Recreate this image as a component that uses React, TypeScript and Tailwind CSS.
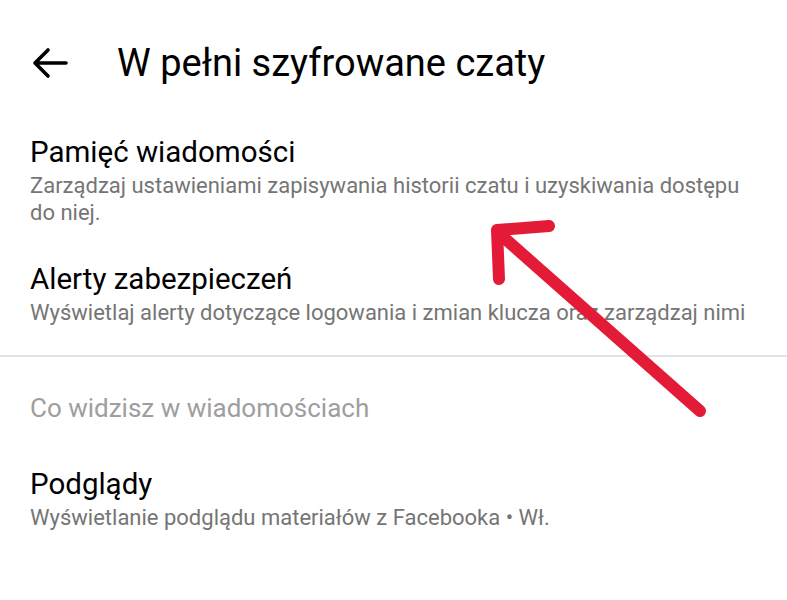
function Row({ title, desc }: { title: string; desc: string }) {
  return (
    <div className="pl-[30px] pr-[30px]">
      <div className="text-[29.5px] leading-[38px] text-black">{title}</div>
      <div className="mt-[1px] text-[22px] leading-[27px] text-[#757575]">{desc}</div>
    </div>
  );
}

function BackArrow() {
  return (
    <svg width="40" height="34" viewBox="0 0 40 34" fill="none" className="text-black">
      <path
        d="M5 17H36M18 4L5 17L18 30"
        stroke="currentColor"
        strokeWidth="3.6"
        strokeLinecap="round"
        strokeLinejoin="round"
      />
    </svg>
  );
}

export default function App() {
  return (
    <div className="relative w-[787px] h-[600px] bg-white overflow-hidden font-['Roboto','Noto_Sans',sans-serif]">
      {/* Header */}
      <div className="flex items-center h-[126px]">
        <div className="w-[117px] pl-[30px] flex items-center">
          <BackArrow />
        </div>
        <h1 className="text-[38px] text-black leading-none">W pełni szyfrowane czaty</h1>
      </div>

      <div className="pt-[7px] flex flex-col gap-[34px]">
        <Row
          title="Pamięć wiadomości"
          desc="Zarządzaj ustawieniami zapisywania historii czatu i uzyskiwania dostępu do niej."
        />
        <Row
          title="Alerty zabezpieczeń"
          desc="Wyświetlaj alerty dotyczące logowania i zmian klucza oraz zarządzaj nimi"
        />
      </div>

      <div className="mt-[29px] h-[2px] bg-[#e3e3e3]" />

      <div className="px-[30px] pt-[35px] text-[26px] leading-[32px] text-[#9e9e9e]">
        Co widzisz w wiadomościach
      </div>

      <div className="mt-[41px]">
        <Row
          title="Podglądy"
          desc="Wyświetlanie podglądu materiałów z Facebooka • Wł."
        />
      </div>

      {/* Red annotation arrow */}
      <svg className="absolute inset-0 pointer-events-none" width="787" height="600">
        <g stroke="#e31b36" strokeWidth="12" strokeLinecap="round" strokeLinejoin="round" fill="none">
          <line x1="700" y1="411" x2="502" y2="236" />
          <polyline points="549,226 497,230 499,279" />
        </g>
      </svg>
    </div>
  );
}
